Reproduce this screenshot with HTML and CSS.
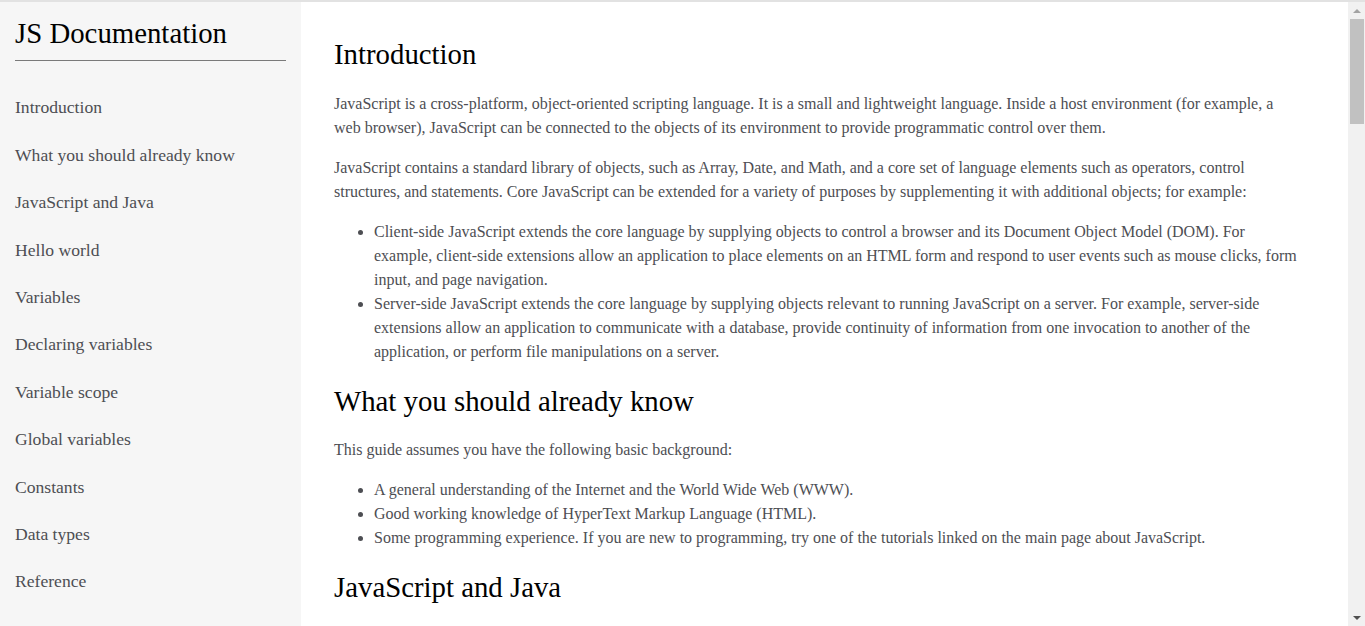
FILE: index.html
```html
<!DOCTYPE html>
<html lang="en">
<head>
<meta charset="utf-8">
<title>JS Documentation</title>
<link rel="stylesheet" href="styles.css">
</head>
<body>
<div class="page">
  <nav class="sidebar" id="navbar">
    <header class="nav-title">JS Documentation</header>
    <ul class="nav-list">
      <li><a class="nav-link" href="#Introduction">Introduction</a></li>
      <li><a class="nav-link" href="#What_you_should_already_know">What you should already know</a></li>
      <li><a class="nav-link" href="#JavaScript_and_Java">JavaScript and Java</a></li>
      <li><a class="nav-link" href="#Hello_world">Hello world</a></li>
      <li><a class="nav-link" href="#Variables">Variables</a></li>
      <li><a class="nav-link" href="#Declaring_variables">Declaring variables</a></li>
      <li><a class="nav-link" href="#Variable_scope">Variable scope</a></li>
      <li><a class="nav-link" href="#Global_variables">Global variables</a></li>
      <li><a class="nav-link" href="#Constants">Constants</a></li>
      <li><a class="nav-link" href="#Data_types">Data types</a></li>
      <li><a class="nav-link" href="#Reference">Reference</a></li>
    </ul>
  </nav>
  <main class="content" id="main-doc">
    <section class="main-section" id="Introduction">
      <h2 class="section-title">Introduction</h2>
      <p>JavaScript is a cross-platform, object-oriented scripting language. It is a small and lightweight language. Inside a host environment (for example, a web browser), JavaScript can be connected to the objects of its environment to provide programmatic control over them.</p>
      <p>JavaScript contains a standard library of objects, such as Array, Date, and Math, and a core set of language elements such as operators, control structures, and statements. Core JavaScript can be extended for a variety of purposes by supplementing it with additional objects; for example:</p>
      <ul>
        <li>Client-side JavaScript extends the core language by supplying objects to control a browser and its Document Object Model (DOM). For example, client-side extensions allow an application to place elements on an HTML form and respond to user events such as mouse clicks, form input, and page navigation.</li>
        <li>Server-side JavaScript extends the core language by supplying objects relevant to running JavaScript on a server. For example, server-side extensions allow an application to communicate with a database, provide continuity of information from one invocation to another of the application, or perform file manipulations on a server.</li>
      </ul>
    </section>
    <section class="main-section" id="What_you_should_already_know">
      <h2 class="section-title">What you should already know</h2>
      <p>This guide assumes you have the following basic background:</p>
      <ul>
        <li>A general understanding of the Internet and the World Wide Web (WWW).</li>
        <li>Good working knowledge of HyperText Markup Language (HTML).</li>
        <li>Some programming experience. If you are new to programming, try one of the tutorials linked on the main page about JavaScript.</li>
      </ul>
    </section>
    <section class="main-section" id="JavaScript_and_Java">
      <h2 class="section-title">JavaScript and Java</h2>
    </section>
  </main>
  <div class="scrollbar" aria-hidden="true">
    <span class="sb-arrow sb-up"></span>
    <span class="sb-thumb"></span>
    <span class="sb-track"></span>
    <span class="sb-arrow sb-down"></span>
  </div>
</div>
</body>
</html>
```
FILE: styles.css
```css
html, body {
  margin: 0;
  padding: 0;
  height: 100%;
  overflow: hidden;
}

body {
  font-family: "Liberation Serif", "Times New Roman", serif;
  background: #ffffff;
  border-top: 2px solid #e2e2e2;
  box-sizing: border-box;
}

.page {
  display: flex;
  height: 624px;
}

.sidebar {
  width: 301px;
  flex: 0 0 301px;
  background: #f6f6f6;
  overflow: hidden;
}

.nav-title {
  margin: 0 15px;
  padding: 15px 0 10px;
  font-size: 28.8px;
  line-height: 33px;
  color: #000;
  border-bottom: 1px solid #7a7a7a;
}

.nav-list {
  list-style: none;
  margin: 0;
  padding: 23.4px 0 0;
}

.nav-link {
  display: block;
  padding: 0 15px;
  font-size: 17.6px;
  line-height: 47.4px;
  color: #4d4e53;
  text-decoration: none;
}

.content {
  flex: 1 1 auto;
  min-width: 0;
  padding: 15px 48px 0 33px;
  overflow: hidden;
  color: #4d4e53;
  font-size: 16px;
  line-height: 24px;
}

.section-title {
  margin: 21px 0 20.5px;
  font-size: 28.8px;
  line-height: 33px;
  font-weight: normal;
  color: #000;
}

.content p {
  margin: 16px 0;
}

.content ul {
  margin: 16px 0;
  padding-left: 40px;
}

.scrollbar {
  flex: 0 0 17px;
  width: 17px;
  background: #f1f1f1;
  display: flex;
  flex-direction: column;
  align-items: stretch;
}

.sb-arrow {
  flex: 0 0 17px;
  display: flex;
  align-items: center;
  justify-content: center;
}

.sb-arrow::before {
  content: "";
  width: 0;
  height: 0;
  border-left: 4px solid transparent;
  border-right: 4px solid transparent;
}

.sb-up::before {
  border-bottom: 4px solid #a3a3a3;
}

.sb-down::before {
  border-top: 4px solid #505050;
}

.sb-thumb {
  flex: 0 0 105px;
  margin: 0 1px 0 2px;
  background: #c1c1c1;
}

.sb-track {
  flex: 1 1 auto;
}
```
